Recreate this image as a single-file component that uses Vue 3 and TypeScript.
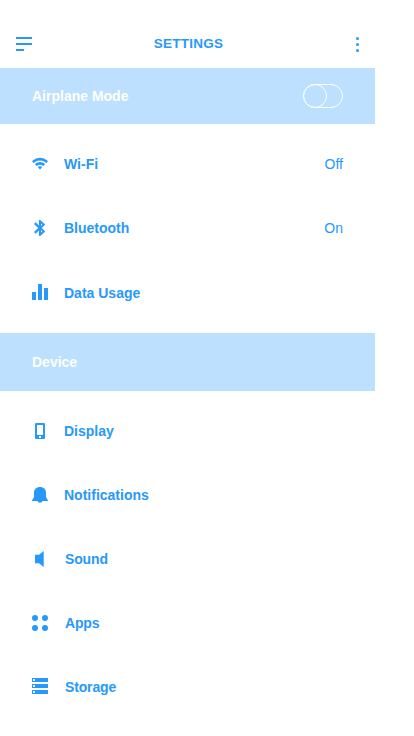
<script setup lang="ts">
interface Item {
  icon: string
  label: string
  value?: string
  mod?: string
}

const network: Item[] = [
  { icon: 'wifi', label: 'Wi-Fi', value: 'Off' },
  { icon: 'bluetooth', label: 'Bluetooth', value: 'On' },
  { icon: 'data', label: 'Data Usage', mod: 'low' },
]

const device: Item[] = [
  { icon: 'display', label: 'Display' },
  { icon: 'bell', label: 'Notifications' },
  { icon: 'sound', label: 'Sound', mod: 'shifted' },
  { icon: 'apps', label: 'Apps', mod: 'shifted' },
  { icon: 'storage', label: 'Storage', mod: 'shifted raised' },
]

const icons: Record<string, string> = {
  wifi: 'M0 4.9Q8 -1.4 16 4.9L14.3 6.9Q8 2.2 1.7 6.9ZM2.8 8.1Q8 3.8 13.2 8.1L11.5 10Q8 7.4 4.5 10ZM5.7 11Q8 9.3 10.3 11L8 13.5Z',
  bluetooth: 'M7 0H8.2L13.2 4.6L9.8 8L13.2 11.4L8.2 16H7V10.5L3.6 13.7L2 12.1L6.2 8L2 3.9L3.6 2.3L7 5.5ZM9 3.6V5.9L10.3 4.7ZM9 10.1V12.4L10.3 11.3Z',
  data: 'M0 8H4V16H0ZM6 0H10V16H6ZM12 4H16V16H12Z',
  display: 'M4 0H12Q13 0 13 1V15Q13 16 12 16H4Q3 16 3 15V1Q3 0 4 0ZM5 2V12H11V2ZM7 13V15H9V13Z',
  bell: 'M8 0C11.6 0 14 2.3 14 5.6V9.4C14 11.4 16 12 16 14H10.6Q10 15.8 8 15.8Q6 15.8 5.4 14H0C0 12 2 11.4 2 9.4V5.6C2 2.3 4.4 0 8 0Z',
  sound: 'M3 3.7H7L11.7 0V16L7 12.3H3Z',
  apps: 'M3 0Q6 0 6 3Q6 6 3 6Q0 6 0 3Q0 0 3 0ZM13 0Q16 0 16 3Q16 6 13 6Q10 6 10 3Q10 0 13 0ZM3 10Q6 10 6 13Q6 16 3 16Q0 16 0 13Q0 10 3 10ZM13 10Q16 10 16 13Q16 16 13 16Q10 16 10 13Q10 10 13 10Z',
  storage: 'M0 0H16V4H0ZM1 1V3H3V1ZM0 6H16V10H0ZM1 7V9H3V7ZM0 12H16V16H0ZM1 13V15H3V13Z',
}
</script>

<template>
  <main class="screen">
    <header class="bar">
      <svg class="menu" width="16" height="14" viewBox="0 0 16 14"><path d="M0 0H16V2H0ZM0 6H16V8H0ZM0 12H8V14H0Z" /></svg>
      <h1 class="title">SETTINGS</h1>
      <svg class="more" width="3" height="15" viewBox="0 0 3 15">
        <circle cx="1.5" cy="1.5" r="1.5" /><circle cx="1.5" cy="7.5" r="1.5" /><circle cx="1.5" cy="13.5" r="1.5" />
      </svg>
    </header>
    <div class="band">
      <span>Airplane Mode</span>
      <svg class="toggle" width="40" height="24" viewBox="0 0 40 24">
        <rect x=".5" y=".5" width="39" height="23" rx="11.5" /><circle cx="12" cy="12" r="11.5" />
      </svg>
    </div>
    <ul class="list">
      <li v-for="item in network" :key="item.label" class="row" :class="item.mod">
        <svg class="icon" viewBox="0 0 16 16"><path fill-rule="evenodd" :d="icons[item.icon]" /></svg>
        <span class="label">{{ item.label }}</span>
        <span v-if="item.value" class="value">{{ item.value }}</span>
      </li>
    </ul>
    <h2 class="band section">Device</h2>
    <ul class="list">
      <li v-for="item in device" :key="item.label" class="row" :class="item.mod">
        <svg class="icon" viewBox="0 0 16 16"><path fill-rule="evenodd" :d="icons[item.icon]" /></svg>
        <span class="label">{{ item.label }}</span>
      </li>
    </ul>
  </main>
</template>

<style>
body { background: #fff; }
</style>

<style scoped>
.screen {
  width: 375px;
  height: 736px;
  overflow: hidden;
  color: #2699fb;
  font: 14px/16px "Liberation Sans", Arial, sans-serif;
}
svg { display: block; flex: none; fill: currentColor; }
.bar {
  display: grid;
  grid-template-columns: 16px 1fr 16px;
  align-items: start;
  height: 68px;
  box-sizing: border-box;
  padding: 37px 16px 0;
}
.title { margin: -2px 0 0; padding-left: 2px; text-align: center; font-size: 13.5px; line-height: 17px; font-weight: 700; letter-spacing: .25px; }
.more { justify-self: end; }
.band {
  display: flex;
  align-items: center;
  justify-content: space-between;
  height: 56px;
  margin: 0;
  padding: 0 32px;
  background: #bce0fd;
  color: #fff;
  font-size: 14px;
  font-weight: 700;
}
.section { height: 58px; }
.toggle { fill: none; stroke: #fff; stroke-width: 1; }
.list { list-style: none; margin: 0; padding: 8px 0; }
.row { display: flex; align-items: center; height: 64px; padding: 0 32px; }
.icon { width: 16px; height: 16px; margin-right: 16px; }
.label { font-weight: 700; }
.value { margin-left: auto; }
.low { height: 65px; }
.low .icon { margin-bottom: 1px; }
.shifted .icon { margin-right: 17px; }
.shifted .label { letter-spacing: -.15px; }
.raised .icon { margin-bottom: 2px; }
</style>
